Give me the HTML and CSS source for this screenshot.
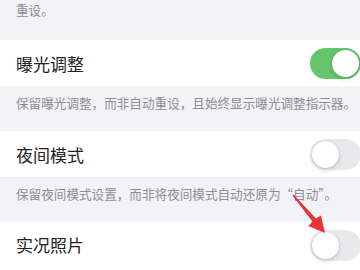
FILE: index.html
```html
<!DOCTYPE html>
<html lang="zh-CN">
<head>
    <meta charset="UTF-8">
    <meta name="viewport" content="width=device-width, initial-scale=1.0">
    <title>保留设置</title>
    <link rel="stylesheet" href="styles.css">
</head>
<body>

    <div class="settings">
        <p class="caption first">重设。</p>

        <div class="row">
            <span class="label">曝光调整</span>
            <span class="switch on"><span class="knob"></span></span>
        </div>
        <p class="caption">保留曝光调整，而非自动重设，且始终显示曝光调整指示器。</p>

        <div class="row">
            <span class="label">夜间模式</span>
            <span class="switch"><span class="knob"></span></span>
        </div>
        <p class="caption">保留夜间模式设置，而非将夜间模式自动还原为“自动”。</p>

        <div class="row last">
            <span class="label">实况照片</span>
            <span class="switch"><span class="knob"></span></span>
        </div>

        <!-- red pointer drawn over the screenshot -->
        <svg class="pointer" width="360" height="270" viewBox="0 0 360 270">
            <polygon points="293.6,194.4 316,218.4 321,215.4 325,233 308.4,226 312.4,221.6 292.4,195.6" fill="#e5343a"/>
        </svg>
    </div>

</body>
</html>
```

FILE: styles.css
```css
body {
    margin: 0;
    background-color: #f2f2f7;
    font-family: "Noto Sans CJK SC", "Noto Sans", sans-serif;
    overflow: hidden;
}

.settings {
    position: relative;
    width: 360px;
    height: 270px;
    overflow: hidden;
}

.caption {
    margin: 0;
    padding: 8px 2px 20px 16px;
    font-size: 12.6px;
    line-height: 17px;
    color: #8e8e93;
    white-space: nowrap;
}

.caption.first {
    padding-top: 1px;
    padding-bottom: 22px;
}

.row {
    display: flex;
    align-items: center;
    height: 46px;
    padding-left: 16px;
    background-color: #fff;
}

.row.last {
    height: 48px;
    align-items: flex-start;
    padding-top: 8px;
}

.label {
    font-size: 17px;
    color: #222;
}

.row.last .label {
    margin-top: 2px;
}

.switch {
    position: relative;
    flex-shrink: 0;
    margin-left: auto;
    margin-right: -1px;
    width: 51px;
    height: 31px;
    border-radius: 16px;
    background-color: #e9e9eb;
}

.switch.on {
    background-color: #66c56a;
}

.knob {
    position: absolute;
    top: 2px;
    left: 2px;
    width: 27px;
    height: 27px;
    border-radius: 50%;
    background-color: #fff;
    box-shadow: 0 2px 5px rgba(0, 0, 0, 0.15), 0 0 1px rgba(0, 0, 0, 0.2);
}

.switch.on .knob {
    left: 22px;
}

.pointer {
    position: absolute;
    top: 0;
    left: 0;
}
```
